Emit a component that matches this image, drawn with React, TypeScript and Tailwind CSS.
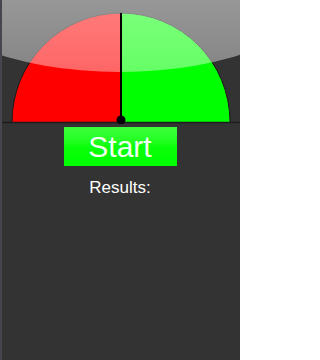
import React from "react";

function Gauge() {
  return (
    <svg width="240" height="124" viewBox="0 0 240 124" className="block">
      <defs>
        <linearGradient id="gloss" x1="0" y1="0" x2="0" y2="1">
          <stop offset="0%" stopColor="#ffffff" stopOpacity="0.62" />
          <stop offset="100%" stopColor="#ffffff" stopOpacity="0.4" />
        </linearGradient>
      </defs>
      {/* dial halves */}
      <path d="M12 122 A109 109 0 0 1 121 13 L121 122 Z" fill="#ff0000" />
      <path d="M121 13 A109 109 0 0 1 230 122 L121 122 Z" fill="#00ff00" />
      <path d="M12 122 A109 109 0 0 1 230 122" fill="none" stroke="#1a1a1a" strokeWidth="1" />
      {/* gloss */}
      <ellipse cx="120" cy="-14" rx="200" ry="86" fill="url(#gloss)" />
      {/* needle + base line */}
      <line x1="121" y1="13" x2="121" y2="121" stroke="#000" strokeWidth="2" />
      <line x1="0" y1="122.5" x2="240" y2="122.5" stroke="#1c1c1c" strokeWidth="1.5" />
      <circle cx="121" cy="120" r="4.5" fill="#000" />
    </svg>
  );
}

export default function App() {
  return (
    <div
      className="w-[240px] h-[360px] bg-[#333333] border-l-2 border-[#46464f] overflow-hidden"
      style={{ fontFamily: '"Liberation Sans", Arial, sans-serif' }}
    >
      <div className="-ml-[2px]">
        <Gauge />
        <button className="block mx-auto mt-[3px] w-[113px] h-[39px] bg-gradient-to-b from-[#3cff3c] via-[#0aff0a] to-[#00ff00] text-[30px] leading-[39px] text-[#f2fff2]">
          Start
        </button>
        <div className="mt-[12px] text-center text-[17px] leading-[20px] text-white">Results:</div>
      </div>
    </div>
  );
}
